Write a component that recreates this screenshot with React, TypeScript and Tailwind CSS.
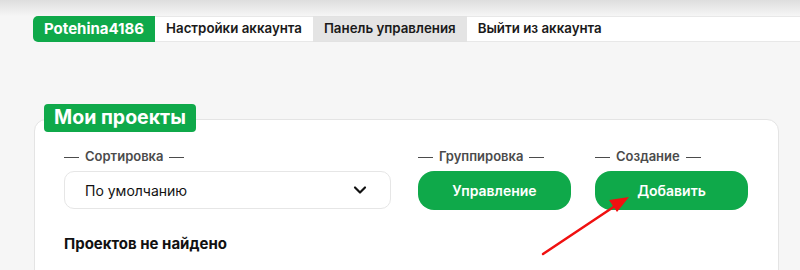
import { ChevronDown } from 'lucide-react';

const font = { fontFamily: 'Inter, "Noto Sans", sans-serif' };

function Legend({ text }: { text: string }) {
  return (
    <div className="mb-[6px] flex h-[16px] items-center gap-[6px] text-[13px] font-semibold text-[#4b4b4b]">
      <span className="h-px w-[15px] bg-[#4b4b4b]" />
      {text}
      <span className="h-px w-[15px] bg-[#4b4b4b]" />
    </div>
  );
}

function GreenButton({ label }: { label: string }) {
  return (
    <button className="flex h-[39px] w-[153px] items-center justify-center rounded-[16px] bg-[#0fa94a] text-[14px] font-semibold text-white">
      {label}
    </button>
  );
}

export default function App() {
  return (
    <div className="h-[270px] w-[800px] overflow-hidden bg-[#f6f6f6]" style={font}>
      {/* top shade */}
      <div className="h-[16px] bg-gradient-to-b from-[#dedede] to-[#f6f6f6]" />

      {/* Nav */}
      <nav className="flex h-[26px] pl-[33px] text-[13.3px] font-semibold text-[#1a1a1a]">
        <div className="flex items-center rounded-l-[5px] bg-[#0fa94a] px-[11px] text-[15px] font-bold text-white">
          Potehina4186
        </div>
        <div className="flex items-center border-y border-[#e8e8e8] bg-white px-[11px]">
          Настройки аккаунта
        </div>
        <div className="flex items-center border-y border-[#e2e2e2] bg-[#e4e4e4] px-[11px]">
          Панель управления
        </div>
        <div className="flex flex-1 items-center border-y border-[#e8e8e8] bg-white px-[11px]">
          Выйти из аккаунта
        </div>
      </nav>

      {/* Card */}
      <section className="relative mt-[77px] ml-[34px] h-[170px] w-[745px] rounded-[12px] border border-[#e4e4e4] bg-white px-[29px] pt-[29px]">
        <div className="absolute -top-[16px] left-[9px] flex h-[28px] items-center rounded-[4px] bg-[#0fa94a] px-[10px] text-[19.5px] font-bold text-white">
          Мои проекты
        </div>

        <div className="flex">
          <div className="mr-[27px]">
            <Legend text="Сортировка" />
            <div className="flex h-[38px] w-[327px] items-center justify-between rounded-[10px] border border-[#e6e6e6] bg-white pl-[20px] pr-[20px] text-[14px] text-[#111]">
              По умолчанию
              <ChevronDown className="h-[20px] w-[20px]" strokeWidth={2.6} />
            </div>
          </div>
          <div className="mr-[24px]">
            <Legend text="Группировка" />
            <GreenButton label="Управление" />
          </div>
          <div>
            <Legend text="Создание" />
            <GreenButton label="Добавить" />
          </div>
        </div>

        <p className="mt-[23px] text-[15px] font-bold text-[#111]">Проектов не найдено</p>
      </section>

      {/* Annotation arrow */}
      <svg className="pointer-events-none absolute left-0 top-0" width="800" height="270">
        <line x1="543" y1="254" x2="618" y2="204" stroke="#f01010" strokeWidth="2.5" strokeLinecap="round" />
        <polygon points="629,197 609,200 617,212" fill="#f01010" />
      </svg>
    </div>
  );
}
